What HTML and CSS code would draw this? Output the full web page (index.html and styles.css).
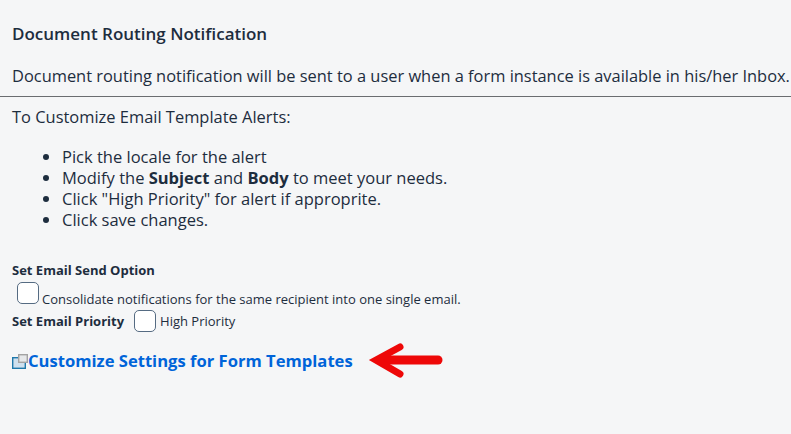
FILE: index.html
```html
<!DOCTYPE html>
<html lang="en">
<head>
<meta charset="UTF-8" />
<title>Document Routing Notification</title>
<link rel="stylesheet" href="styles.css">
</head>
<body>

<div class="container">
  <h1>Document Routing Notification</h1>
  <p class="intro">Document routing notification will be sent to a user when a form instance is available in his/her Inbox.</p>
  <hr />
  <p class="subhead">To Customize Email Template Alerts:</p>
  <ul class="steps">
    <li>Pick the locale for the alert</li>
    <li>Modify the <b>Subject</b> and <b>Body</b> to meet your needs.</li>
    <li>Click "High Priority" for alert if approprite.</li>
    <li>Click save changes.</li>
  </ul>

  <div class="option-title">Set Email Send Option</div>
  <div class="option-row consolidate">
    <span class="checkbox"></span>
    <span>Consolidate notifications for the same recipient into one single email.</span>
  </div>
  <div class="option-row priority">
    <b>Set Email Priority</b>
    <span class="checkbox"></span>
    <span>High Priority</span>
  </div>

  <div class="link-row">
    <a class="settings-link" href="#">
      <svg class="link-icon" width="16" height="15" viewBox="0 0 16 15">
        <rect x="0.7" y="3.7" width="12.6" height="10.6" fill="#cfe0ee" stroke="#1f78ab" stroke-width="1.4" />
        <rect x="6.7" y="0.7" width="8.6" height="7.6" fill="#e6e8ea" stroke="#a3a3a3" stroke-width="1.4" />
      </svg>Customize Settings for Form Templates
    </a>
    <svg class="arrow" width="76" height="38" viewBox="0 0 76 38">
      <path d="M70 19H12" fill="none" stroke="#ee0808" stroke-width="9" stroke-linecap="round" />
      <path d="M32 6L8 19L32 33" fill="none" stroke="#ee0808" stroke-width="7" stroke-linecap="round" stroke-linejoin="miter" />
    </svg>
  </div>
</div>

</body>
</html>
```

FILE: styles.css
```css
* {
  box-sizing: border-box;
}
body {
  margin: 0;
  height: 434px;
  overflow: hidden;
  background: #f5f6f7;
  color: #1d2d3e;
  font-family: "Open Sans", "Noto Sans", sans-serif;
}
.container {
  padding: 23px 0 0 12px;
  width: 791px;
}
h1 {
  margin: 0;
  font-size: 17px;
  line-height: 22px;
  font-weight: 600;
}
.intro {
  margin: 20px 0 0;
  font-size: 16.42px;
  line-height: 22px;
  white-space: nowrap;
}
hr {
  margin: 9px 0 0 -12px;
  border: none;
  border-top: 1px solid #6a6d70;
}
.subhead {
  margin: 9px 0 0;
  font-size: 16.45px;
  line-height: 22px;
}
.steps {
  margin: 18px 0 0;
  padding: 0 0 0 50px;
  font-size: 16.5px;
  line-height: 21px;
}
.option-title {
  margin-top: 32px;
  font-size: 13px;
  line-height: 16px;
  font-weight: 700;
}
.option-row {
  display: flex;
  font-size: 13px;
  line-height: 16px;
}
.consolidate {
  align-items: baseline;
  margin: 4px 0 0 5px;
  gap: 3px;
}
.priority {
  align-items: center;
  margin-top: 3px;
  gap: 4px;
}
.priority b {
  margin-right: 6px;
}
.checkbox {
  width: 22px;
  height: 22px;
  background: #fff;
  border: 1px solid #556b82;
  border-radius: 5px;
}
.link-row {
  display: flex;
  align-items: center;
  margin-top: 18px;
}
.settings-link {
  color: #0064d9;
  font-size: 16.6px;
  font-weight: 700;
  text-decoration: none;
  line-height: 22px;
}
.link-icon {
  vertical-align: -2px;
}
.arrow {
  position: absolute;
  left: 368px;
  top: 341px;
}
```
